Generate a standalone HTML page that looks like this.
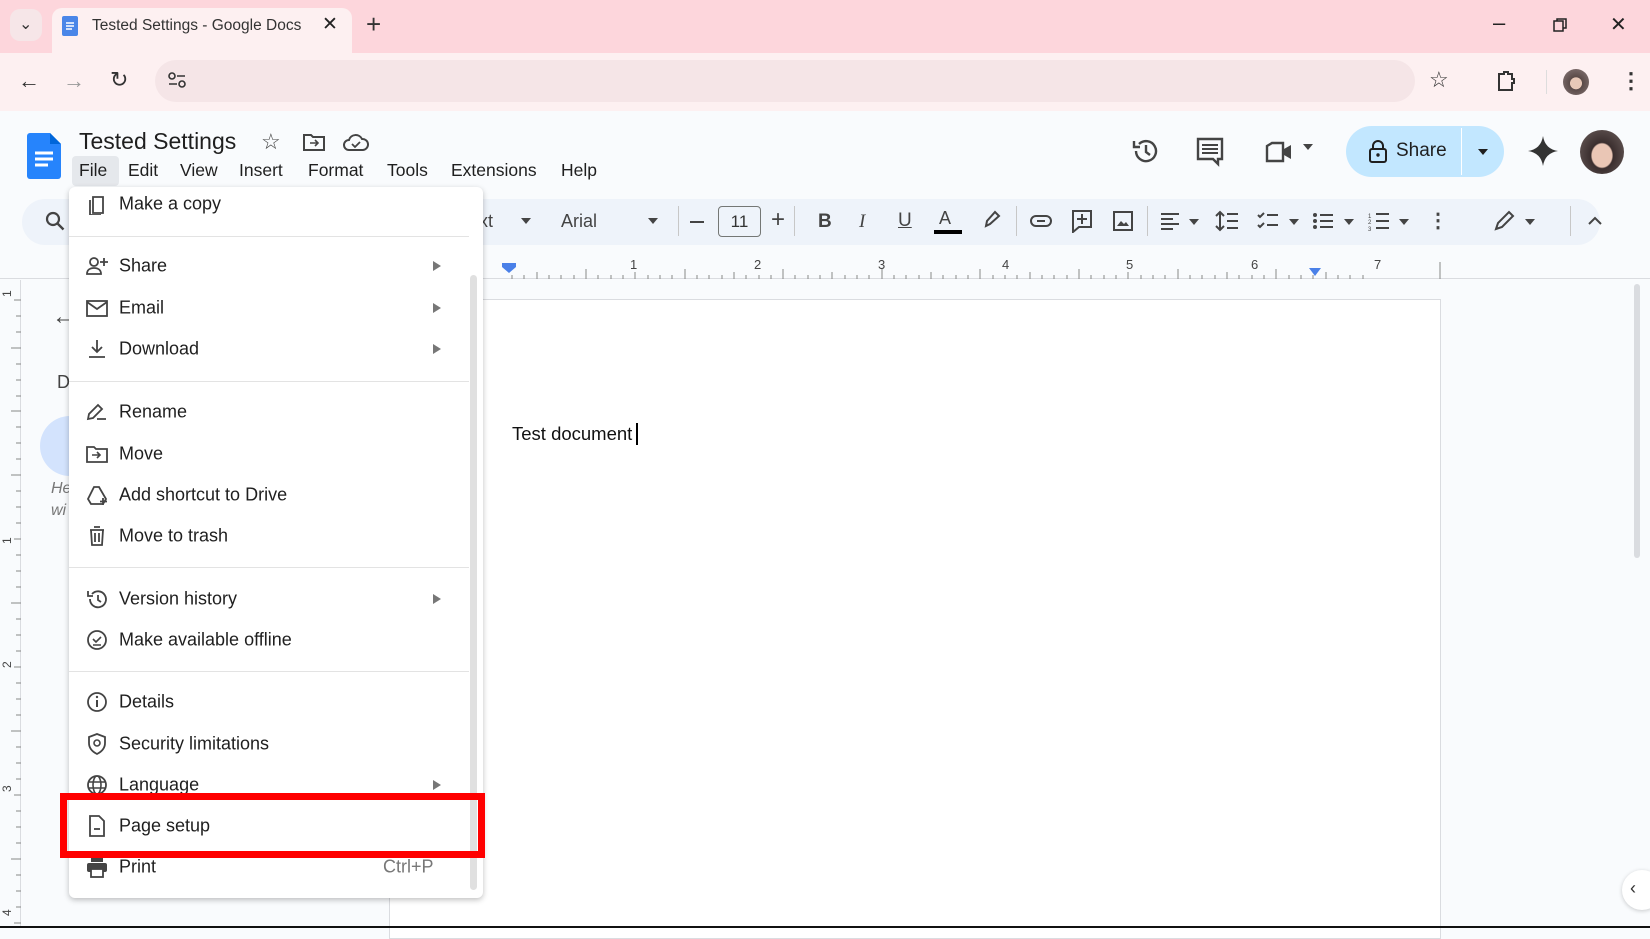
<!DOCTYPE html>
<html><head><style>
*{margin:0;padding:0;box-sizing:border-box}
body{width:1650px;height:928px;overflow:hidden;background:#f9fbfd;font-family:"Liberation Sans",Arial,sans-serif;color:#1f1f1f;position:relative}
.a{position:absolute}
.tabbar{left:0;top:0;width:1650px;height:53px;background:#fdd6dc}
.tab{left:52px;top:8px;width:300px;height:45px;background:#fdf0f1;border-radius:10px 10px 0 0}
.addr{left:0;top:53px;width:1650px;height:58px;background:#fdf0f1}
.omni{left:155px;top:60px;width:1260px;height:42px;background:#f5e5e7;border-radius:21px}
.menu-t{top:160px;font-size:17.5px;color:#1f1f1f}
.tool{left:22px;top:199px;width:1578px;height:46px;background:#eef3fa;border-radius:23px}
.page{left:389px;top:299px;width:1052px;height:640px;background:#fff;border:1px solid #dadce0}
.menu{left:69px;top:187px;width:414px;height:711px;background:#fff;border-radius:6px;box-shadow:0 2px 6px rgba(0,0,0,.25)}
.it{position:absolute;left:50px;font-size:18px;color:#1f1f1f;transform:translateY(-50%)}
.ic{position:absolute;left:17px;width:22px;height:22px;transform:translateY(-50%)}
.arr{position:absolute;left:364px;width:0;height:0;border-left:8px solid #777;border-top:5px solid transparent;border-bottom:5px solid transparent;transform:translateY(-50%)}
.sep{position:absolute;left:0;width:400px;height:1px;background:#e3e3e3}
.ti{font-size:18px;color:#444}
</style></head><body>
<div class="a tabbar"></div>
<div class="a tab"></div>
<div class="a" style="left:10px;top:9px;width:32px;height:32px;border-radius:10px;background:#f6e6e8"></div>
<div class="a" style="left:19px;top:14px;font-size:16px;color:#333">⌄</div>
<svg class="a" style="left:61px;top:15px" width="18" height="22"><rect x="1" y="1" width="16" height="20" rx="2" fill="#4a86e8"/><path d="M5 8h8M5 11h8M5 14h6" stroke="#fff" stroke-width="1.6"/></svg>
<div class="a" style="left:92px;top:17px;font-size:15.5px;color:#333">Tested Settings - Google Docs</div>
<div class="a" style="left:322px;top:13px;font-size:19px;color:#222">✕</div>
<div class="a" style="left:366px;top:9px;font-size:26px;color:#333;font-weight:300">+</div>
<div class="a" style="left:1493px;top:10px;font-size:22px;color:#222">–</div>
<svg class="a" style="left:1553px;top:18px" width="14" height="14"><rect x="1" y="3" width="9" height="10" fill="none" stroke="#222" stroke-width="1.5"/><path d="M4 3V1h9v9h-3" fill="none" stroke="#222" stroke-width="1.5"/></svg>
<div class="a" style="left:1610px;top:12px;font-size:20px;color:#222">✕</div>
<div class="a addr"></div>
<div class="a omni"></div>
<div class="a" style="left:18px;top:68px;font-size:22px;color:#333">←</div>
<div class="a" style="left:63px;top:68px;font-size:22px;color:#999">→</div>
<div class="a" style="left:110px;top:67px;font-size:22px;color:#333">↻</div>
<svg class="a" style="left:168px;top:72px" width="18" height="17"><circle cx="4" cy="4" r="3" fill="none" stroke="#333" stroke-width="1.6"/><path d="M9 4h8M1 12h8" stroke="#333" stroke-width="1.6"/><circle cx="14" cy="12" r="3" fill="none" stroke="#333" stroke-width="1.6"/></svg>
<div class="a" style="left:1429px;top:67px;font-size:22px;color:#333">☆</div>
<svg class="a" style="left:1496px;top:70px" width="20" height="22"><path d="M3 4h5V2h4v2h4v5h2v4h-2v7H3z" fill="none" stroke="#333" stroke-width="2"/></svg>
<div class="a" style="left:1546px;top:70px;width:1px;height:24px;background:#ddd"></div>
<div class="a" style="left:1563px;top:69px;width:26px;height:26px;border-radius:50%;background:radial-gradient(circle at 50% 55%,#e8c8b8 30%,#5a4a48 32%,#8a7a7a)"></div>
<div class="a" style="left:1620px;top:68px;font-size:22px;color:#333;font-weight:bold">⋮</div>

<svg class="a" style="left:27px;top:133px" width="34" height="46"><path d="M3 0h20l11 11v32a3 3 0 0 1-3 3H3a3 3 0 0 1-3-3V3a3 3 0 0 1 3-3z" fill="#2684fc"/><path d="M23 0v11h11z" fill="#0066da"/><path d="M8 20h18M8 26h18M8 32h13" stroke="#fff" stroke-width="3"/></svg>
<div class="a" style="left:79px;top:128px;font-size:23px;color:#1f1f1f">Tested Settings</div>
<div class="a" style="left:261px;top:129px;font-size:22px;color:#444">☆</div>
<svg class="a" style="left:303px;top:133px" width="22" height="18"><path d="M1 2h7l2 2h11v13H1z" fill="none" stroke="#444" stroke-width="2"/><path d="M7 10h8M12 7l3 3-3 3" fill="none" stroke="#444" stroke-width="1.6"/></svg>
<svg class="a" style="left:343px;top:133px" width="26" height="18"><path d="M6 17a5 5 0 0 1 0-10 7 7 0 0 1 13-1 5.5 5.5 0 0 1 1 11z" fill="none" stroke="#444" stroke-width="2"/><path d="M9 11l3 3 5-5" fill="none" stroke="#444" stroke-width="1.8"/></svg>
<div class="a" style="left:72px;top:156px;width:47px;height:30px;background:#e5e8ec;border-radius:4px"></div>
<div class="a menu-t" style="left:79px">File</div>
<div class="a menu-t" style="left:128px">Edit</div>
<div class="a menu-t" style="left:180px">View</div>
<div class="a menu-t" style="left:239px">Insert</div>
<div class="a menu-t" style="left:308px">Format</div>
<div class="a menu-t" style="left:387px">Tools</div>
<div class="a menu-t" style="left:451px">Extensions</div>
<div class="a menu-t" style="left:561px">Help</div>

<svg class="a" style="left:1131px;top:136px" width="30" height="30"><path d="M5 15a10 10 0 1 0 3-7" fill="none" stroke="#444" stroke-width="2.4"/><path d="M3 5v6h6" fill="none" stroke="#444" stroke-width="2.4"/><path d="M15 9v7l4 3" fill="none" stroke="#444" stroke-width="2.4"/></svg>
<svg class="a" style="left:1196px;top:137px" width="28" height="30"><path d="M2 2h24v20h-4v5l-5-5H2z" fill="none" stroke="#444" stroke-width="2.4"/><path d="M6 8h16M6 12h16M6 16h16" stroke="#444" stroke-width="2"/></svg>
<svg class="a" style="left:1265px;top:141px" width="30" height="22"><path d="M2 5l5-3h11v18H2z" fill="none" stroke="#444" stroke-width="2.4"/><path d="M19 8l7-4v14l-7-4" fill="#444"/></svg>
<div class="a" style="left:1303px;top:144px;border-left:5px solid transparent;border-right:5px solid transparent;border-top:6px solid #444"></div>
<div class="a" style="left:1346px;top:126px;width:158px;height:51px;background:#c2e7ff;border-radius:26px"></div>
<div class="a" style="left:1461px;top:128px;width:1px;height:47px;background:#fff"></div>
<svg class="a" style="left:1369px;top:140px" width="18" height="23"><rect x="1" y="9" width="16" height="13" rx="2" fill="none" stroke="#1f1f1f" stroke-width="2"/><path d="M4 9V6a5 5 0 0 1 10 0v3" fill="none" stroke="#1f1f1f" stroke-width="2"/><circle cx="9" cy="15" r="1.7" fill="#1f1f1f"/></svg>
<div class="a" style="left:1396px;top:140px;font-size:19px;color:#1f1f1f">Share</div>
<div class="a" style="left:1478px;top:149px;border-left:5px solid transparent;border-right:5px solid transparent;border-top:6px solid #1f1f1f"></div>
<svg class="a" style="left:1528px;top:136px" width="30" height="30"><path d="M15 0Q17 13 30 15Q17 17 15 30Q13 17 0 15Q13 13 15 0z" fill="#333"/></svg>
<div class="a" style="left:1580px;top:130px;width:44px;height:44px;border-radius:50%;background:radial-gradient(ellipse at 50% 58%,#eac6b5 32%,#3a2e2e 36%,#6e605e)"></div>

<div class="a tool"></div>
<svg class="a" style="left:45px;top:211px" width="20" height="20"><circle cx="8" cy="8" r="6" fill="none" stroke="#444" stroke-width="2.2"/><path d="M12.5 12.5l6 6" stroke="#444" stroke-width="2.4"/></svg>
<div class="a ti" style="left:479px;top:211px">xt</div>
<div class="a" style="left:521px;top:218px;border-left:5px solid transparent;border-right:5px solid transparent;border-top:6px solid #444"></div>
<div class="a ti" style="left:561px;top:211px">Arial</div>
<div class="a" style="left:648px;top:218px;border-left:5px solid transparent;border-right:5px solid transparent;border-top:6px solid #444"></div>
<div class="a" style="left:678px;top:206px;width:1px;height:30px;background:#c7c7c7"></div>
<div class="a" style="left:690px;top:221px;width:14px;height:2px;background:#444"></div>
<div class="a" style="left:718px;top:206px;width:43px;height:31px;border:1px solid #747775;border-radius:4px;font-size:17px;text-align:center;line-height:29px;color:#333">11</div>
<div class="a" style="left:771px;top:206px;font-size:24px;color:#444">+</div>
<div class="a" style="left:794px;top:206px;width:1px;height:30px;background:#c7c7c7"></div>
<div class="a" style="left:818px;top:211px;font-size:19px;font-weight:bold;color:#444">B</div>
<div class="a" style="left:859px;top:211px;font-size:19px;font-style:italic;font-family:'Liberation Serif',serif;color:#444">I</div>
<div class="a" style="left:898px;top:210px;font-size:19px;text-decoration:underline;color:#444">U</div>
<div class="a" style="left:939px;top:208px;font-size:18px;color:#444">A</div>
<div class="a" style="left:934px;top:230px;width:28px;height:4px;background:#000"></div>
<svg class="a" style="left:982px;top:210px" width="20" height="20"><path d="M4 16l1-5 8-9 4 4-9 8z" fill="none" stroke="#444" stroke-width="2"/></svg>
<div class="a" style="left:1016px;top:206px;width:1px;height:30px;background:#c7c7c7"></div>
<svg class="a" style="left:1030px;top:214px" width="22" height="14"><rect x="1" y="2" width="20" height="10" rx="5" fill="none" stroke="#444" stroke-width="2"/><path d="M7 7h8" stroke="#444" stroke-width="2"/></svg>
<svg class="a" style="left:1071px;top:209px" width="22" height="24"><path d="M2 2h18v16H8l-6 5z" fill="none" stroke="#444" stroke-width="2"/><path d="M11 5v10M6 10h10" stroke="#444" stroke-width="2"/></svg>
<svg class="a" style="left:1113px;top:211px" width="20" height="20"><rect x="1" y="1" width="18" height="18" fill="none" stroke="#444" stroke-width="2"/><path d="M4 15l4-5 3 3 2-2 3 4z" fill="#444"/></svg>
<div class="a" style="left:1147px;top:206px;width:1px;height:30px;background:#c7c7c7"></div>
<svg class="a" style="left:1160px;top:212px" width="20" height="18"><path d="M1 2h18M1 7h12M1 12h18M1 17h12" stroke="#444" stroke-width="2"/></svg>
<div class="a" style="left:1189px;top:219px;border-left:5px solid transparent;border-right:5px solid transparent;border-top:6px solid #444"></div>
<svg class="a" style="left:1215px;top:210px" width="24" height="22"><path d="M5 2v18M1 6l4-4 4 4M1 16l4 4 4-4M12 4h11M12 11h11M12 18h11" fill="none" stroke="#444" stroke-width="2"/></svg>
<svg class="a" style="left:1257px;top:211px" width="22" height="20"><path d="M1 4l2 2 4-4M1 14l2 2 4-4M10 4h11M10 14h11" fill="none" stroke="#444" stroke-width="2"/></svg>
<div class="a" style="left:1289px;top:219px;border-left:5px solid transparent;border-right:5px solid transparent;border-top:6px solid #444"></div>
<svg class="a" style="left:1312px;top:212px" width="22" height="18"><circle cx="3" cy="3" r="2" fill="#444"/><circle cx="3" cy="9" r="2" fill="#444"/><circle cx="3" cy="15" r="2" fill="#444"/><path d="M8 3h13M8 9h13M8 15h13" stroke="#444" stroke-width="2"/></svg>
<div class="a" style="left:1344px;top:219px;border-left:5px solid transparent;border-right:5px solid transparent;border-top:6px solid #444"></div>
<svg class="a" style="left:1368px;top:211px" width="22" height="20"><path d="M8 3h13M8 10h13M8 17h13" stroke="#444" stroke-width="2"/><text x="0" y="7" font-size="6" fill="#444">1</text><text x="0" y="13" font-size="6" fill="#444">2</text><text x="0" y="20" font-size="6" fill="#444">3</text></svg>
<div class="a" style="left:1399px;top:219px;border-left:5px solid transparent;border-right:5px solid transparent;border-top:6px solid #444"></div>
<div class="a" style="left:1428px;top:208px;font-size:20px;font-weight:bold;color:#444">⋮</div>
<svg class="a" style="left:1493px;top:210px" width="22" height="22"><path d="M3 19l2-6L16 2l4 4L9 17z" fill="none" stroke="#444" stroke-width="2"/></svg>
<div class="a" style="left:1525px;top:219px;border-left:5px solid transparent;border-right:5px solid transparent;border-top:6px solid #444"></div>
<div class="a" style="left:1570px;top:206px;width:1px;height:30px;background:#c7c7c7"></div>
<svg class="a" style="left:1588px;top:216px" width="14" height="10"><path d="M1 8l6-6 6 6" fill="none" stroke="#444" stroke-width="2"/></svg>

<div class="a" style="left:0;top:278px;width:1650px;height:1px;background:#dadce0"></div>
<svg class="a" style="left:389px;top:258px" width="1052" height="22">
<g stroke="#888" stroke-width="1">
<path d="M123 21V17M135 21V17M148 21V14M160 21V17M172 21V17M185 21V17M197 21V11M209 21V17M222 21V17M234 21V17M246 21V14M259 21V17M271 21V17M283 21V17M296 21V11M308 21V17M320 21V17M333 21V17M345 21V14M357 21V17M370 21V17M382 21V17M394 21V11M406 21V17M419 21V17M431 21V17M443 21V14M456 21V17M468 21V17M480 21V17M493 21V11M505 21V17M517 21V17M530 21V17M542 21V14M554 21V17M567 21V17M579 21V17M591 21V11M604 21V17M616 21V17M628 21V17M641 21V14M653 21V17M665 21V17M678 21V17M690 21V11M702 21V17M715 21V17M727 21V17M739 21V14M752 21V17M764 21V17M776 21V17M789 21V11M801 21V17M813 21V17M826 21V17M838 21V14M850 21V17M863 21V17M875 21V17M887 21V11M900 21V17M912 21V17M924 21V17M937 21V14M949 21V17M961 21V17M974 21V17M1051 21V4"/></g>
<g font-size="13" fill="#444" font-family="Liberation Sans"><text x="241" y="11">1</text><text x="365" y="11">2</text><text x="489" y="11">3</text><text x="613" y="11">4</text><text x="737" y="11">5</text><text x="862" y="11">6</text><text x="985" y="11">7</text></g>
<path d="M113 5h14v4l-7 6-7-6z" fill="#4a80e8"/><path d="M920 10h12l-6 8z" fill="#4a80e8"/>
</svg>
<div class="a" style="left:0;top:280px;width:21px;height:648px;background:#f9fbfd;border-right:1px solid #dadce0"></div>
<svg class="a" style="left:0;top:280px" width="22" height="648">
<g stroke="#888"><path d="M14 20H21M16 36H21M16 52H21M11 68H21M16 84H21M16 100H21M16 116H21M11 131H21M16 147H21M16 163H21M16 179H21M11 195H21M16 211H21M16 227H21M16 243H21M14 259H21M16 275H21M16 291H21M16 307H21M11 323H21M16 339H21M16 355H21M16 371H21M14 387H21M16 403H21M16 419H21M16 435H21M11 451H21M16 467H21M16 483H21M16 499H21M14 515H21M16 531H21M16 547H21M16 563H21M11 579H21M16 595H21M16 611H21M16 627H21M14 643H21"/></g>
<g font-size="12" fill="#444" font-family="Liberation Sans"><text x="10" y="24" transform="rotate(-90 7 20)">1</text><text x="10" y="271" transform="rotate(-90 7 267)">1</text><text x="10" y="395" transform="rotate(-90 7 391)">2</text><text x="10" y="519" transform="rotate(-90 7 515)">3</text><text x="10" y="643" transform="rotate(-90 7 639)">4</text></g>
</svg>
<div class="a" style="left:52px;top:303px;font-size:24px;color:#444">←</div>
<div class="a" style="left:57px;top:372px;font-size:18px;color:#444">D</div>
<div class="a" style="left:40px;top:416px;width:60px;height:60px;border-radius:50%;background:#d3e3fd"></div>
<div class="a" style="left:51px;top:478px;font-size:16px;font-style:italic;color:#777;line-height:22px">He<br>wi</div>

<div class="a page"></div>
<div class="a" style="left:512px;top:423px;font-size:18.5px;color:#111">Test document</div>
<div class="a" style="left:636px;top:423px;width:1.5px;height:22px;background:#000"></div>
<div class="a" style="left:1634px;top:284px;width:6px;height:274px;background:#dadce0;border-radius:3px"></div>
<div class="a" style="left:1622px;top:870px;width:40px;height:40px;border-radius:50%;background:#fff;box-shadow:0 1px 4px rgba(0,0,0,.2)"></div>
<div class="a" style="left:1630px;top:878px;font-size:18px;color:#333">‹</div>
<div class="a" style="left:0;top:926px;width:1650px;height:2px;background:#111"></div>

<div class="a menu">
 <div class="a" style="left:401px;top:88px;width:7px;height:615px;background:#e0e0e0;border-radius:4px"></div>
 <svg class="ic" style="top:17px" viewBox="0 0 22 22"><path d="M7 4h10v16H7z" fill="none" stroke="#444" stroke-width="1.8"/><path d="M4 7v15h11" fill="none" stroke="#444" stroke-width="1.8"/></svg><div class="it" style="top:17px">Make a copy</div>
 <div class="sep" style="top:49px"></div>
 <svg class="ic" style="top:79px" viewBox="0 0 22 22"><circle cx="8" cy="7" r="4" fill="none" stroke="#444" stroke-width="1.8"/><path d="M1 19c0-4 3-6 7-6s7 2 7 6z" fill="none" stroke="#444" stroke-width="1.8"/><path d="M18 3v8M14 7h8" stroke="#444" stroke-width="1.8"/></svg><div class="it" style="top:79px">Share</div><div class="arr" style="top:79px"></div>
 <svg class="ic" style="top:121px" viewBox="0 0 22 22"><rect x="1" y="4" width="20" height="15" fill="none" stroke="#444" stroke-width="1.8"/><path d="M1 5l10 7 10-7" fill="none" stroke="#444" stroke-width="1.8"/></svg><div class="it" style="top:121px">Email</div><div class="arr" style="top:121px"></div>
 <svg class="ic" style="top:162px" viewBox="0 0 22 22"><path d="M11 2v12M6 9l5 5 5-5M3 19h16" fill="none" stroke="#444" stroke-width="1.8"/></svg><div class="it" style="top:162px">Download</div><div class="arr" style="top:162px"></div>
 <div class="sep" style="top:194px"></div>
 <svg class="ic" style="top:225px" viewBox="0 0 22 22"><path d="M2 18l1-5 9-9 4 4-9 9zM11 18h9" fill="none" stroke="#444" stroke-width="1.8"/></svg><div class="it" style="top:225px">Rename</div>
 <svg class="ic" style="top:267px" viewBox="0 0 22 22"><path d="M1 4h7l2 2h11v13H1z" fill="none" stroke="#444" stroke-width="1.8"/><path d="M6 12h8M11 9l3 3-3 3" fill="none" stroke="#444" stroke-width="1.6"/></svg><div class="it" style="top:267px">Move</div>
 <svg class="ic" style="top:308px" viewBox="0 0 22 22"><path d="M8 3h5l7 12-3 5H5l-3-5z" fill="none" stroke="#444" stroke-width="1.8"/><path d="M17 14v7M14 17.5h7" stroke="#444" stroke-width="1.8"/></svg><div class="it" style="top:308px">Add shortcut to Drive</div>
 <svg class="ic" style="top:349px" viewBox="0 0 22 22"><path d="M4 5h14M8 2h6M5 5l1 15h10l1-15M9 8v9M13 8v9" fill="none" stroke="#444" stroke-width="1.8"/></svg><div class="it" style="top:349px">Move to trash</div>
 <div class="sep" style="top:380px"></div>
 <svg class="ic" style="top:412px" viewBox="0 0 22 22"><path d="M4 11a8 8 0 1 0 2-5" fill="none" stroke="#444" stroke-width="1.8"/><path d="M2 3v5h5M12 7v5l3 2" fill="none" stroke="#444" stroke-width="1.8"/></svg><div class="it" style="top:412px">Version history</div><div class="arr" style="top:412px"></div>
 <svg class="ic" style="top:453px" viewBox="0 0 22 22"><circle cx="11" cy="11" r="9" fill="none" stroke="#444" stroke-width="1.8"/><path d="M7 10l3 3 5-5M7 16h8" fill="none" stroke="#444" stroke-width="1.6"/></svg><div class="it" style="top:453px">Make available offline</div>
 <div class="sep" style="top:484px"></div>
 <svg class="ic" style="top:515px" viewBox="0 0 22 22"><circle cx="11" cy="11" r="9" fill="none" stroke="#444" stroke-width="1.8"/><path d="M11 9v7" stroke="#444" stroke-width="2"/><circle cx="11" cy="6" r="1.2" fill="#444"/></svg><div class="it" style="top:515px">Details</div>
 <svg class="ic" style="top:557px" viewBox="0 0 22 22"><path d="M11 1l8 3v6c0 6-4 9-8 11-4-2-8-5-8-11V4z" fill="none" stroke="#444" stroke-width="1.8"/><circle cx="11" cy="10" r="3" fill="none" stroke="#444" stroke-width="1.6"/></svg><div class="it" style="top:557px">Security limitations</div>
 <svg class="ic" style="top:598px" viewBox="0 0 22 22"><circle cx="11" cy="11" r="9" fill="none" stroke="#444" stroke-width="1.8"/><ellipse cx="11" cy="11" rx="4" ry="9" fill="none" stroke="#444" stroke-width="1.6"/><path d="M2 8h18M2 14h18" stroke="#444" stroke-width="1.6"/></svg><div class="it" style="top:598px">Language</div><div class="arr" style="top:598px"></div>
 <svg class="ic" style="top:639px" viewBox="0 0 22 22"><path d="M4 1h9l5 5v15H4z" fill="none" stroke="#444" stroke-width="1.8"/><path d="M8 14h6" stroke="#444" stroke-width="1.8"/></svg><div class="it" style="top:639px">Page setup</div>
 <svg class="ic" style="top:680px" viewBox="0 0 22 22"><path d="M5 1h12v5H5z" fill="#444"/><rect x="1" y="7" width="20" height="9" rx="2" fill="#444"/><rect x="5" y="13" width="12" height="8" fill="#fff" stroke="#444" stroke-width="1.8"/></svg><div class="it" style="top:680px">Print</div>
 <div class="it" style="top:680px;left:314px;color:#777">Ctrl+P</div>
</div>
<div class="a" style="left:60px;top:793px;width:425px;height:65px;border:7px solid #f00"></div>
</body></html>
